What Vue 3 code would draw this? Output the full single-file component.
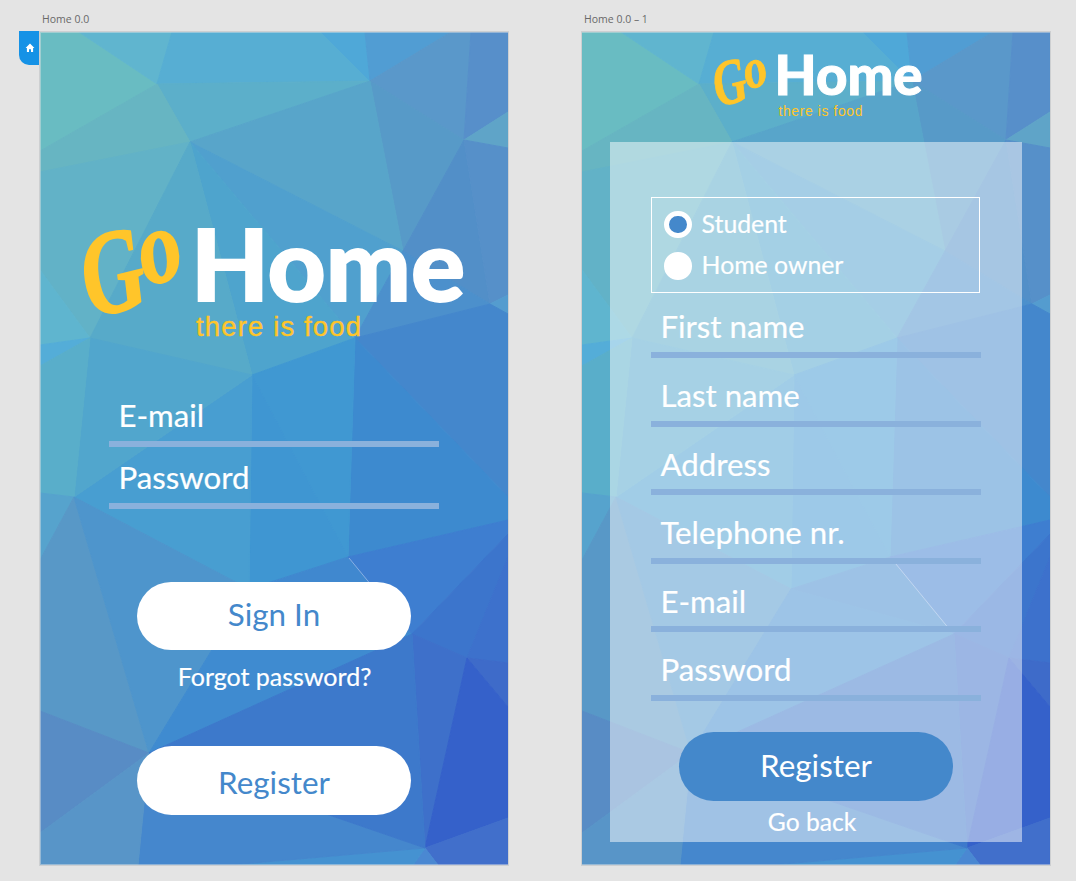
<script setup>
import { h } from 'vue'

// Shared low-poly backdrop, in canvas coordinates of the first artboard
const facets = [
  ['40,32 79,32 157,84 40,151', '#69bcc2'],
  ['79,32 172,32 157,84', '#60b5cf'],
  ['172,32 321,32 370,81 157,84', '#57aed3'],
  ['157,84 370,81 190,142', '#5cafca'],
  ['40,151 157,84 190,142 40,172', '#67b5c2'],
  ['40,172 190,142 90,338 40,270', '#62b2c7'],
  ['321,32 365,32 370,81', '#4fa8d8'],
  ['365,32 451,32 370,81', '#519dd3'],
  ['451,32 471,32 464,140 370,81', '#5a98ca'],
  ['471,32 508,32 508,112 464,140', '#578fca'],
  ['464,140 508,112 508,148', '#5fa4c8'],
  ['370,81 464,140 403,251', '#579ac8'],
  ['190,142 370,81 403,251', '#58a5ca'],
  ['190,142 403,251 355,338', '#50a0ce'],
  ['190,142 355,338 252,375', '#4ea4cd'],
  ['190,142 252,375 90,338', '#57aac9'],
  ['464,140 403,251 490,304', '#528fc8'],
  ['464,140 508,148 508,295 490,304', '#5690c9'],
  ['403,251 490,304 355,338', '#4c90cc'],
  ['490,304 508,295 508,314', '#549ccf'],
  ['490,304 508,314 508,497 355,338', '#4487cc'],
  ['355,338 508,497 508,520 348,557', '#3d8acf'],
  ['355,338 348,557 252,375', '#4098d2'],
  ['252,375 348,557 249,589', '#3f96d2'],
  ['252,375 249,589 74,497', '#489ed1'],
  ['90,338 252,375 74,497', '#51a6cd'],
  ['40,270 90,338 40,345', '#5fb5cf'],
  ['40,345 90,338 40,366', '#54add8'],
  ['40,366 90,338 74,497 40,493', '#59aeca'],
  ['40,493 74,497 40,560', '#56a3cd'],
  ['40,560 74,497 149,753 40,711', '#5898c7'],
  ['74,497 249,589 149,753', '#4e95cc'],
  ['249,589 348,557 412,634', '#4088cf'],
  ['249,589 412,634 149,753', '#3f8bd0'],
  ['348,557 508,520 508,534 412,634', '#3e7ed0'],
  ['412,634 508,534 508,557 467,658', '#3c75cc'],
  ['508,557 508,663 467,658', '#3d71cc'],
  ['467,658 508,663 508,707', '#3e6bc9'],
  ['412,634 467,658 425,848', '#3e70ca'],
  ['467,658 508,707 508,818 425,848', '#3561ca'],
  ['425,848 508,818 508,865 438,865', '#416fcb'],
  ['425,848 438,865 413,865', '#4a88d2'],
  ['425,848 413,865 230,865', '#4592d1'],
  ['425,848 230,865 138,865 149,753', '#4587cd'],
  ['149,753 412,634 425,848', '#3d79cb'],
  ['40,711 149,753 40,833', '#588cc5'],
  ['40,833 149,753 138,865 40,865', '#5895c8'],
]

const Backdrop = () =>
  h('svg', { viewBox: '40 32 468 833', width: 468, height: 833, 'aria-hidden': 'true' }, [
    ...facets.map(([points, fill]) =>
      h('polygon', { points, fill, stroke: fill, 'stroke-width': 1, 'stroke-linejoin': 'round' })),
    h('path', { d: 'M349 558L408 630', stroke: '#8fb6e4', 'stroke-width': 0.9, fill: 'none' }),
  ])

const signIn = ['E-mail', 'Password']
const register = ['First name', 'Last name', 'Address', 'Telephone nr.', 'E-mail', 'Password']
</script>

<template>
  <main class="canvas">
    <section class="frame">
      <h2 class="title">Home 0.0</h2>
      <div class="board edged">
        <Backdrop class="backdrop" />
        <span class="tab">
          <svg viewBox="0 0 10 10" width="10" height="10">
            <path d="M5 .6L9.4 5H8.1V9H6V6.2H4V9H1.9V5H.6Z" fill="#fff" />
          </svg>
        </span>
        <svg class="logo" viewBox="80 220 390 122" width="390" height="122">
          <g class="script" transform="rotate(-14 130 270)">
            <text x="81" y="307" font-size="118" textLength="62" lengthAdjust="spacingAndGlyphs">G</text>
            <text x="142" y="289" font-size="104" textLength="42" lengthAdjust="spacingAndGlyphs">o</text>
          </g>
          <text class="home" x="191" y="301.4" font-size="100" textLength="274" lengthAdjust="spacingAndGlyphs">Home</text>
          <text class="tag" x="196" y="336" font-size="27.5" textLength="165">there is food</text>
        </svg>
        <div class="fields login">
          <label v-for="f in signIn" :key="f" class="field">{{ f }}</label>
        </div>
        <button class="pill">Sign In</button>
        <a class="link">Forgot password?</a>
        <button class="pill second">Register</button>
      </div>
    </section>

    <section class="frame">
      <h2 class="title">Home 0.0 – 1</h2>
      <div class="board">
        <Backdrop class="backdrop" />
        <svg class="logo-small" viewBox="710 50 216 70" width="216" height="70">
          <g class="script small" transform="rotate(-14 739 81)">
            <text x="713" y="101" font-size="64" textLength="33" lengthAdjust="spacingAndGlyphs">G</text>
            <text x="745.5" y="91" font-size="56" textLength="23" lengthAdjust="spacingAndGlyphs">o</text>
          </g>
          <text class="home small" x="774.6" y="94.7" font-size="54.7" textLength="148" lengthAdjust="spacingAndGlyphs">Home</text>
          <text class="tag thin" x="778.5" y="116" font-size="14" textLength="84">there is food</text>
        </svg>
        <div class="panel">
          <div class="roles">
            <div class="role"><i class="dot on"></i><span>Student</span></div>
            <div class="role"><i class="dot"></i><span>Home owner</span></div>
          </div>
          <div class="fields signup">
            <label v-for="f in register" :key="f" class="field">{{ f }}</label>
          </div>
          <button class="pill solid">Register</button>
          <a class="link back">Go back</a>
        </div>
      </div>
    </section>
  </main>
</template>

<style>
html, body { background: #e4e4e4; }
body { margin: 0; overflow: hidden; }
</style>

<style scoped>
.canvas {
  box-sizing: border-box;
  width: 1076px;
  height: 881px;
  padding-left: 40px;
  display: flex;
  gap: 74px;
  background: #e4e4e4;
  font-family: Lato, "Noto Sans", sans-serif;
}
.frame { width: 468px; }
.title {
  box-sizing: border-box;
  height: 32px;
  margin: 0;
  padding: 12px 0 0 2px;
  font: 400 10.5px/15px "Open Sans", "Noto Sans", sans-serif;
  color: #696969;
}
.board {
  position: relative;
  width: 468px;
  height: 833px;
  box-shadow: 0 0 0 1px #cdcfd1;
  display: flex;
  flex-direction: column;
  align-items: center;
}
.board::after {
  content: "";
  position: absolute;
  inset: 0;
  border-top: 1px solid rgba(228, 228, 228, .45);
  border-bottom: 1px solid rgba(228, 228, 228, .45);
  pointer-events: none;
}
.edged::after { border-left: 1px solid rgba(228, 228, 228, .45); }
.backdrop { position: absolute; left: 0; top: 0; }
.tab {
  position: absolute;
  left: -21px;
  top: -1px;
  width: 20px;
  height: 34px;
  border-bottom-left-radius: 10px;
  background: #1592e6;
  display: flex;
  align-items: center;
  justify-content: center;
}
.tab svg { margin-left: 2px; }
.logo, .logo-small { position: relative; flex: none; overflow: visible; }
.logo { margin: 188px 0 0 2px; }
.logo-small { margin: 18px 0 0 4px; }
.script {
  font-family: "Liberation Serif", serif;
  font-weight: 700;
  font-style: italic;
  fill: #ffc52a;
  stroke: #ffc52a;
  stroke-width: 2px;
  stroke-linejoin: round;
}
.home { font-family: Lato, sans-serif; font-weight: 900; fill: #fff; stroke: #fff; stroke-width: 1.8px; }
.small { stroke-width: 1px; }
.tag { font-family: "Liberation Sans", sans-serif; fill: #ffc52a; stroke: #ffc52a; stroke-width: .4px; }
.thin { stroke: none; }

.fields { position: relative; width: 330px; display: flex; flex-direction: column; }
.field {
  box-sizing: border-box;
  display: flex;
  align-items: flex-end;
  padding: 0 0 7.7px 9.5px;
  border-bottom: 6px solid #8ab1dc;
  color: #fff;
  font-size: 31.2px;
  line-height: 36px;
  -webkit-text-stroke: .2px #fff;
}
.login { margin-top: 42px; }
.login .field { height: 62.5px; }

.pill {
  position: relative;
  flex: none;
  width: 274.5px;
  height: 68.5px;
  padding: 0 0 3px;
  border: 0;
  border-radius: 35px;
  background: #fff;
  color: #4488cb;
  font: 400 31.4px/36px Lato, sans-serif;
}
.login + .pill { margin-top: 72.6px; }
.link {
  position: relative;
  margin: 11px 0 0 1px;
  color: #fff;
  font-size: 25px;
  line-height: 30px;
  -webkit-text-stroke: .2px #fff;
}
.second { margin-top: 55.3px; padding: 2px 0 0; }

.panel {
  position: relative;
  width: 412px;
  height: 700px;
  margin-top: 22px;
  background: rgba(255, 255, 255, .49);
  display: flex;
  flex-direction: column;
  align-items: center;
}
.roles {
  box-sizing: border-box;
  width: 329px;
  height: 96px;
  margin: 55px 2px 0 0;
  padding: 6px 0 0 12.6px;
  border: 1.4px solid #fff;
}
.role {
  height: 41.3px;
  display: flex;
  align-items: center;
  gap: 10px;
  color: #fff;
  font-size: 24.8px;
  line-height: 30px;
  -webkit-text-stroke: .2px #fff;
}
.role span { padding-bottom: 1.4px; }
.dot { box-sizing: border-box; width: 27.5px; height: 27.5px; border-radius: 50%; background: #fff; }
.on { border: 5px solid #fff; background: #4488cb; }
.signup { margin-top: -3.6px; }
.signup .field { height: 68.6px; }
.solid { margin-top: 31.3px; background: #4488cb; color: #fff; padding-bottom: 4px; }
.back { margin: 6px 0 0 -8px; font-size: 24.6px; }
</style>
